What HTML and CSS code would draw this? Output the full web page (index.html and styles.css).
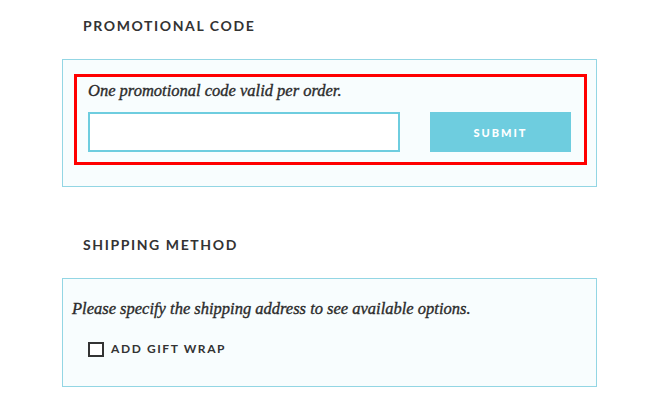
FILE: index.html
```html
<!DOCTYPE html>
<html lang="en">
<head>
  <meta charset="UTF-8">
  <meta name="viewport" content="width=device-width, initial-scale=1.0">
  <title>Checkout</title>
  <link rel="stylesheet" href="styles.css">
</head>
<body>
  <div class="checkout">
    <h2 class="section-title">Promotional Code</h2>
    <div class="panel">
      <form class="promo-form">
        <p class="note">One promotional code valid per order.</p>
        <div class="promo-row">
          <input type="text" class="promo-input" name="promo">
          <button type="submit" class="submit-btn">Submit</button>
        </div>
      </form>
    </div>

    <h2 class="section-title shipping-title">Shipping Method</h2>
    <div class="panel panel-shipping">
      <p class="note">Please specify the shipping address to see available options.</p>
      <label class="gift-wrap">
        <span class="check"></span>
        <span class="gift-label">Add Gift Wrap</span>
      </label>
    </div>
  </div>
</body>
</html>
```

FILE: styles.css
```css
:root {
  --text: #333333;
  --accent: #6ecddf;
  --panel-border: #93d6e4;
  --panel-bg: #f8fdfe;
  --highlight: #ff0000;
}
* {
  box-sizing: border-box;
  margin: 0;
  padding: 0;
}
body {
  background: #ffffff;
  color: var(--text);
  font-family: Lato, 'Liberation Sans', sans-serif;
}
.checkout {
  width: 597px;
  padding: 16px 0 0 62px;
}
.section-title {
  font-size: 14px;
  line-height: 20px;
  font-weight: 700;
  letter-spacing: 1.6px;
  text-transform: uppercase;
  padding-left: 21px;
  margin-bottom: 23px;
}
.shipping-title {
  margin-top: 48px;
}
.panel {
  border: 1px solid var(--panel-border);
  background: var(--panel-bg);
  padding: 14px 9px 21px 11px;
}
.promo-form {
  border: 3px solid var(--highlight);
  padding: 4px 13px 10px 11px;
}
.note {
  font-family: 'Liberation Serif', serif;
  font-style: italic;
  font-size: 16.5px;
  line-height: 20px;
  color: #2b2b2b;
  -webkit-text-stroke: 0.35px #2b2b2b;
}
.promo-row {
  display: flex;
  gap: 30px;
  margin-top: 11px;
}
.promo-input {
  width: 312px;
  height: 40px;
  border: 2px solid var(--accent);
  background: #ffffff;
  outline: none;
  padding: 0 10px;
  font-size: 14px;
}
.submit-btn {
  width: 141px;
  height: 40px;
  border: none;
  background: var(--accent);
  color: #ffffff;
  font-family: Lato, 'Liberation Sans', sans-serif;
  font-size: 11px;
  font-weight: 900;
  letter-spacing: 2px;
  text-transform: uppercase;
  cursor: pointer;
}
.panel-shipping {
  padding: 20px 9px 27px 9px;
}
.gift-wrap {
  display: flex;
  align-items: center;
  gap: 7px;
  margin-top: 20px;
  padding-left: 16px;
  line-height: 20px;
}
.check {
  width: 16px;
  height: 15px;
  border: 2px solid var(--text);
  background: #ffffff;
}
.gift-label {
  font-size: 12px;
  font-weight: 700;
  letter-spacing: 1.6px;
  text-transform: uppercase;
}
```
